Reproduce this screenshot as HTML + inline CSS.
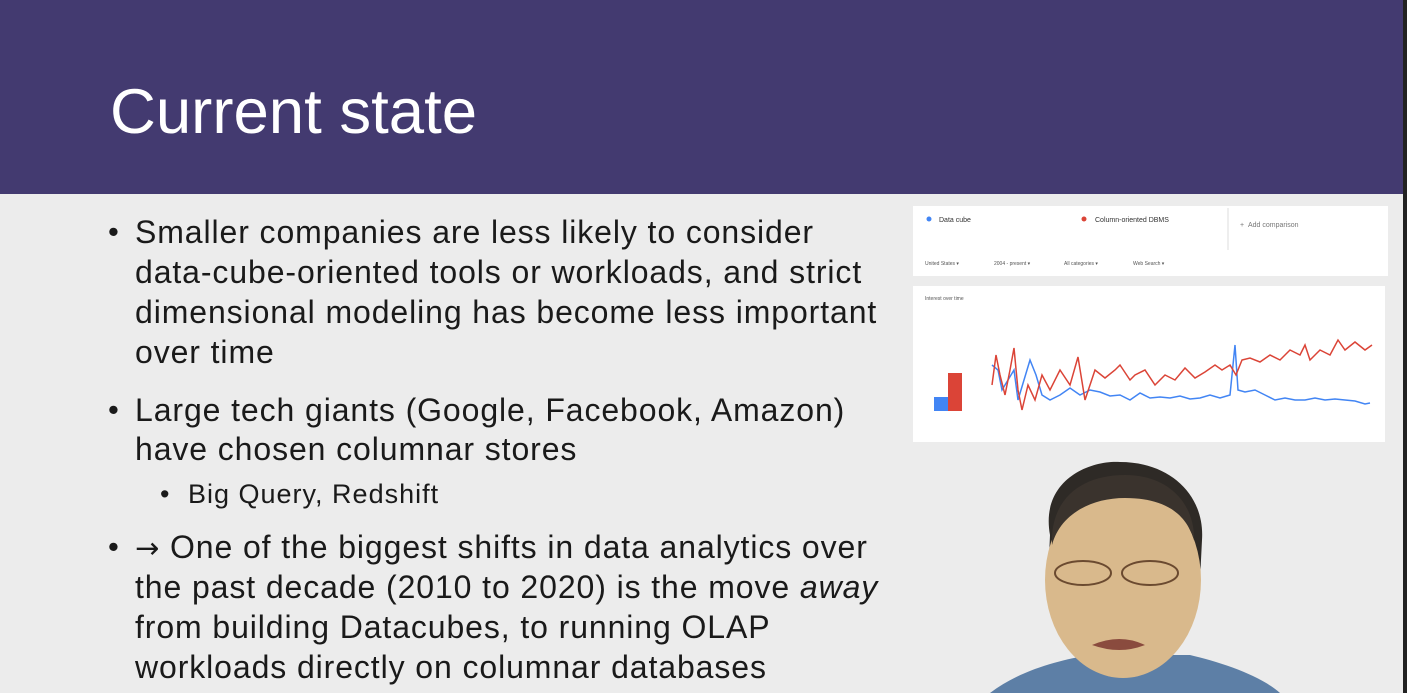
<!DOCTYPE html>
<html><head><style>
html,body{margin:0;padding:0}
body{width:1407px;height:693px;overflow:hidden;background:#ececec;position:relative;font-family:"Liberation Sans",sans-serif}
.hdr{position:absolute;left:0;top:0;width:1407px;height:194px;background:#433a70}
.hdr h1{position:absolute;left:110px;top:76px;margin:0;font-weight:normal;color:#fff;font-size:63.5px;line-height:72px}
.t{position:absolute;left:135px;color:#1a1a1a;font-size:32px;line-height:40px;white-space:nowrap;letter-spacing:0.9px}
.b{position:absolute;left:108px;font-size:31px;line-height:40px;color:#1a1a1a}
.s{position:absolute;left:188px;font-size:27px;line-height:34px;color:#1a1a1a;white-space:nowrap;letter-spacing:1px}
.edge{position:absolute;right:0;top:0;width:4px;height:693px;background:#222}
</style></head><body>
<div class="hdr"><h1>Current state</h1></div>
<div class="b" style="top:212px">•</div>
<div class="t" style="top:212px">Smaller companies are less likely to consider</div>
<div class="t" style="top:252px">data-cube-oriented tools or workloads, and strict</div>
<div class="t" style="top:292px">dimensional modeling has become less important</div>
<div class="t" style="top:332px">over time</div>
<div class="b" style="top:390px">•</div>
<div class="t" style="top:390px">Large tech giants (Google, Facebook, Amazon)</div>
<div class="t" style="top:429px">have chosen columnar stores</div>
<div class="s" style="left:160px;top:477px">•</div>
<div class="s" style="top:477px">Big Query, Redshift</div>
<div class="b" style="top:527px">•</div>
<div class="t" style="top:527px"><span style="font-family:'DejaVu Sans';font-size:29px">→</span> One of the biggest shifts in data analytics over</div>
<div class="t" style="top:567px">the past decade (2010 to 2020) is the move <i>away</i></div>
<div class="t" style="top:607px">from building Datacubes, to running OLAP</div>
<div class="t" style="top:647px">workloads directly on columnar databases</div>

<svg style="position:absolute;left:910px;top:200px" width="490" height="250" viewBox="0 0 490 250">
<rect x="3" y="6" width="475" height="70" fill="#fff"/>
<line x1="318" y1="8" x2="318" y2="50" stroke="#ddd"/>
<circle cx="19" cy="19" r="2.5" fill="#4285f4"/><text x="29" y="22" font-size="7" fill="#333">Data cube</text>
<circle cx="174" cy="19" r="2.5" fill="#db4437"/><text x="185" y="22" font-size="7" fill="#333">Column-oriented DBMS</text>
<text x="330" y="27" font-size="7" fill="#777">+ &#160;Add comparison</text>
<text x="15" y="65" font-size="5" fill="#555">United States ▾</text><text x="84" y="65" font-size="5" fill="#555">2004 - present ▾</text>
<text x="154" y="65" font-size="5" fill="#555">All categories ▾</text><text x="223" y="65" font-size="5" fill="#555">Web Search ▾</text>
<rect x="3" y="86" width="472" height="156" fill="#fff"/>
<text x="15" y="100" font-size="5" fill="#555">Interest over time</text>
<rect x="24" y="197" width="14" height="14" fill="#4285f4"/><rect x="38" y="173" width="14" height="38" fill="#db4437"/>
<polyline fill="none" stroke="#4285f4" stroke-width="1.5" points="82,165 88,170 92,190 98,180 104,170 108,200 114,180 120,160 126,175 132,195 140,200 150,195 160,188 170,195 180,190 190,192 200,196 210,195 220,200 230,193 240,198 250,197 260,198 270,196 280,199 290,198 300,195 310,198 320,195 325,145 328,190 335,192 345,190 355,195 365,200 375,198 385,200 395,200 405,198 415,200 425,199 435,200 445,201 455,204 460,203"/>
<polyline fill="none" stroke="#db4437" stroke-width="1.5" points="82,185 86,155 90,175 95,195 100,170 104,148 108,190 112,210 118,185 125,200 132,175 140,190 150,170 160,185 168,157 175,200 185,170 195,178 205,170 210,165 220,180 225,175 235,170 245,185 255,175 265,180 275,168 285,178 295,172 305,165 312,170 320,165 326,175 332,160 340,158 350,162 360,155 370,160 380,150 390,155 395,145 400,160 410,150 420,155 428,140 435,150 445,142 455,150 462,145"/>
</svg>

<svg style="position:absolute;left:980px;top:450px" width="320" height="243" viewBox="0 0 320 243">
<path d="M10,243 C40,220 80,210 110,205 L210,205 C240,212 280,225 300,243 Z" fill="#5d7fa6"/>
<path d="M70,85 C60,30 110,10 140,12 C190,12 225,45 222,90 L220,130 L68,130 Z" fill="#2e2a26"/>
<ellipse cx="143" cy="130" rx="78" ry="98" fill="#d9b98c"/>
<path d="M72,95 C70,50 100,25 145,25 C190,25 215,55 214,90 C205,60 180,48 145,48 C110,48 80,65 72,95Z" fill="#3a332d"/>
<ellipse cx="103" cy="123" rx="28" ry="12" fill="none" stroke="#6b4a30" stroke-width="2"/>
<ellipse cx="170" cy="123" rx="28" ry="12" fill="none" stroke="#6b4a30" stroke-width="2"/>
<path d="M112,195 Q140,183 165,195 Q140,205 112,195Z" fill="#8a4b3e"/>
</svg>
<div class="edge"></div>
</body></html>
